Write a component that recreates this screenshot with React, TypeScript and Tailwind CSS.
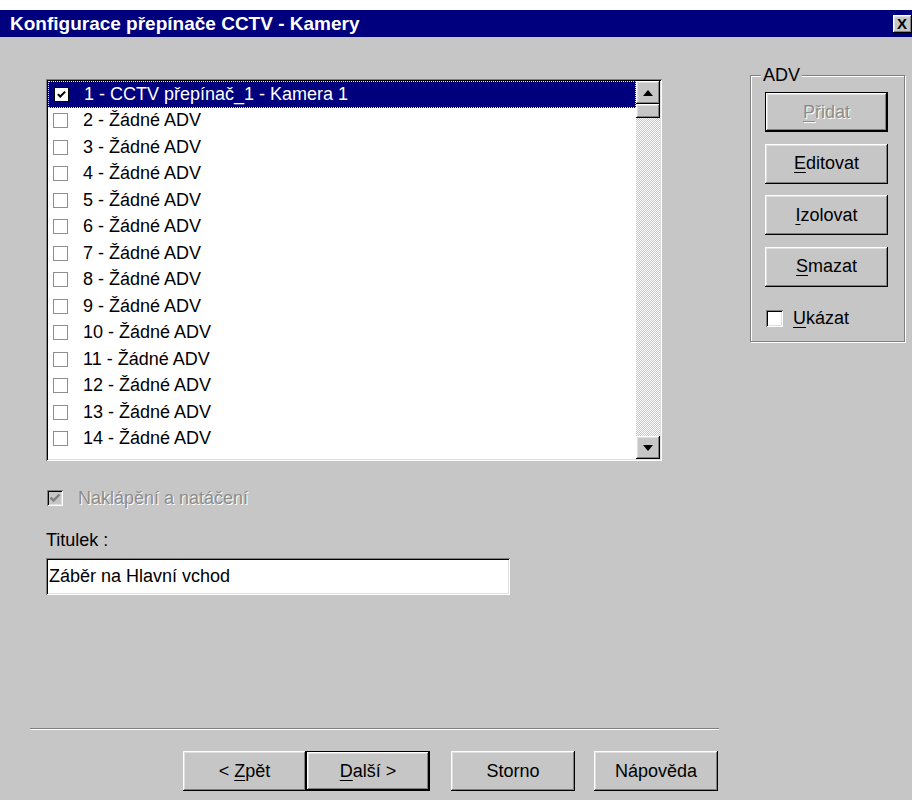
import React from "react";

// 3D bevels used by the classic dialog controls
const raised =
  "shadow-[inset_-1px_-1px_0_#000,inset_1px_1px_0_#fff,inset_-2px_-2px_0_#808080,inset_2px_2px_0_#dfdfdf]";
const sunken =
  "shadow-[inset_1px_1px_0_#808080,inset_-1px_-1px_0_#fff,inset_2px_2px_0_#000,inset_-2px_-2px_0_#dfdfdf]";

const rows = [
  "1 - CCTV přepínač_1 - Kamera 1",
  ...Array.from({ length: 13 }, (_, i) => `${i + 2} - Žádné ADV`),
];

const Check = ({ color = "#000" }: { color?: string }) => (
  <svg viewBox="0 0 16 16" className="w-full h-full">
    <path d="M3.5 7.5 L6.5 10.5 L12.5 4.5" fill="none" stroke={color} strokeWidth={2.4} />
  </svg>
);

const Arrow = ({ up }: { up?: boolean }) => (
  <svg viewBox="0 0 10 6" className="w-[10px] h-[6px]">
    <polygon points={up ? "5,0 10,6 0,6" : "0,0 10,0 5,6"} fill="#000" />
  </svg>
);

type BtnProps = {
  children: React.ReactNode;
  isDefault?: boolean;
  disabled?: boolean;
  width?: string;
};

const Button = ({ children, isDefault, disabled, width = "w-[123px]" }: BtnProps) => (
  <div
    className={`${width} h-[40px] shrink-0 flex items-center justify-center bg-[#c6c6c6] text-[18px] ${raised} ${
      isDefault ? "border border-black" : ""
    } ${disabled ? "text-[#8c8c8c] [text-shadow:1px_1px_0_#fff]" : "text-black"}`}
  >
    <span className="whitespace-pre">{children}</span>
  </div>
);

const Key = ({ children }: { children: React.ReactNode }) => (
  <span className="underline underline-offset-[3px] decoration-1">{children}</span>
);

export default function App() {
  return (
    <div className="w-[912px] h-[800px] overflow-hidden flex flex-col bg-[#c6c6c6] font-['Liberation_Sans',Arial,sans-serif] text-black">
      <div className="h-[10px] bg-white" />

      {/* Title bar */}
      <div className="h-[27px] bg-[#00007f] flex items-center">
        <span className="flex-1 pl-[10px] text-white font-bold text-[19px] leading-none">
          Konfigurace přepínače CCTV - Kamery
        </span>
        <div className={`w-[19px] h-[18px] bg-[#c6c6c6] ${raised} overflow-hidden`}>
          <span className="block pl-[4px] text-[15px] font-bold leading-[18px]">X</span>
        </div>
      </div>

      <div className="flex items-start">
        {/* Left column */}
        <div className="flex flex-col pl-[46px] pt-[42px]">
          <div className={`w-[616px] h-[382px] p-[2px] flex bg-white ${sunken}`}>
            <div className="flex-1 flex flex-col">
              {rows.map((label, i) => {
                const selected = i === 0;
                return (
                  <div
                    key={label}
                    className={`h-[26.5px] shrink-0 flex items-center pl-[5px] text-[18px] ${
                      selected
                        ? "bg-[#00007f] text-white border border-dotted border-[#f0f0c0] pl-[4px]"
                        : ""
                    }`}
                  >
                    <div
                      className={`w-[15px] h-[15px] bg-white ${
                        selected ? "border border-black" : "border border-[#8e8e8e]"
                      }`}
                    >
                      {selected && <Check />}
                    </div>
                    <span className="ml-[15px] whitespace-nowrap">{label}</span>
                  </div>
                );
              })}
            </div>

            {/* Vertical scrollbar */}
            <div className="w-[24px] flex flex-col">
              <div className={`h-[23px] flex items-center justify-center bg-[#c6c6c6] ${raised}`}>
                <Arrow up />
              </div>
              <div className={`h-[14px] bg-[#c6c6c6] ${raised}`} />
              <div className="flex-1 bg-[repeating-conic-gradient(#c6c6c6_0%_25%,#ffffff_0%_50%)] bg-[length:2px_2px]" />
              <div className={`h-[23px] flex items-center justify-center bg-[#c6c6c6] ${raised}`}>
                <Arrow />
              </div>
            </div>
          </div>

          <div className="mt-[27px] h-[20px] flex items-center">
            <div className={`ml-[1px] w-[16px] h-[16px] bg-[#c6c6c6] ${sunken}`}>
              <Check color="#808080" />
            </div>
            <span className="ml-[15px] text-[18px] text-[#8c8c8c] [text-shadow:1px_1px_0_#fff]">
              Naklápění a natáčení
            </span>
          </div>

          <div className="mt-[22px] h-[20px] text-[18px] leading-[20px]">Titulek :</div>

          <div className={`mt-[8px] w-[464px] h-[37px] bg-white px-[3px] flex items-center text-[18px] ${sunken}`}>
            Záběr na Hlavní vchod
          </div>
        </div>

        {/* ADV group */}
        <div className="relative ml-[88px] mt-[38px] w-[155px] h-[267px] border border-[#808080] shadow-[inset_1px_1px_0_#fff,1px_1px_0_#fff] pl-[14px] pt-[16px] flex flex-col gap-[11.5px]">
          <span className="absolute -top-[11px] left-[10px] px-[2px] bg-[#c6c6c6] text-[18px] leading-[20px]">
            ADV
          </span>
          <Button isDefault disabled>
            <Key>P</Key>řidat
          </Button>
          <Button>
            <Key>E</Key>ditovat
          </Button>
          <Button>
            <Key>I</Key>zolovat
          </Button>
          <Button>
            <Key>S</Key>mazat
          </Button>
          <div className="mt-[10.5px] h-[20px] flex items-center">
            <div className={`ml-[1px] w-[17px] h-[17px] bg-white ${sunken}`} />
            <span className="ml-[10px] text-[18px]">
              <Key>U</Key>kázat
            </span>
          </div>
        </div>
      </div>

      {/* Wizard navigation */}
      <div className="mt-auto flex flex-col pb-[9px]">
        <div className="ml-[30px] w-[689px] h-[2px] border-t border-b border-t-[#808080] border-b-white" />
        <div className="mt-[21px] pl-[183px] flex">
          <Button>
            {"< "}
            <Key>Z</Key>pět
          </Button>
          <Button isDefault width="w-[124px]">
            <Key>D</Key>
            {"alší >"}
          </Button>
          <div className="ml-[21px]">
            <Button width="w-[124px]">Storno</Button>
          </div>
          <div className="ml-[19px]">
            <Button width="w-[124px]">Nápověda</Button>
          </div>
        </div>
      </div>
    </div>
  );
}
